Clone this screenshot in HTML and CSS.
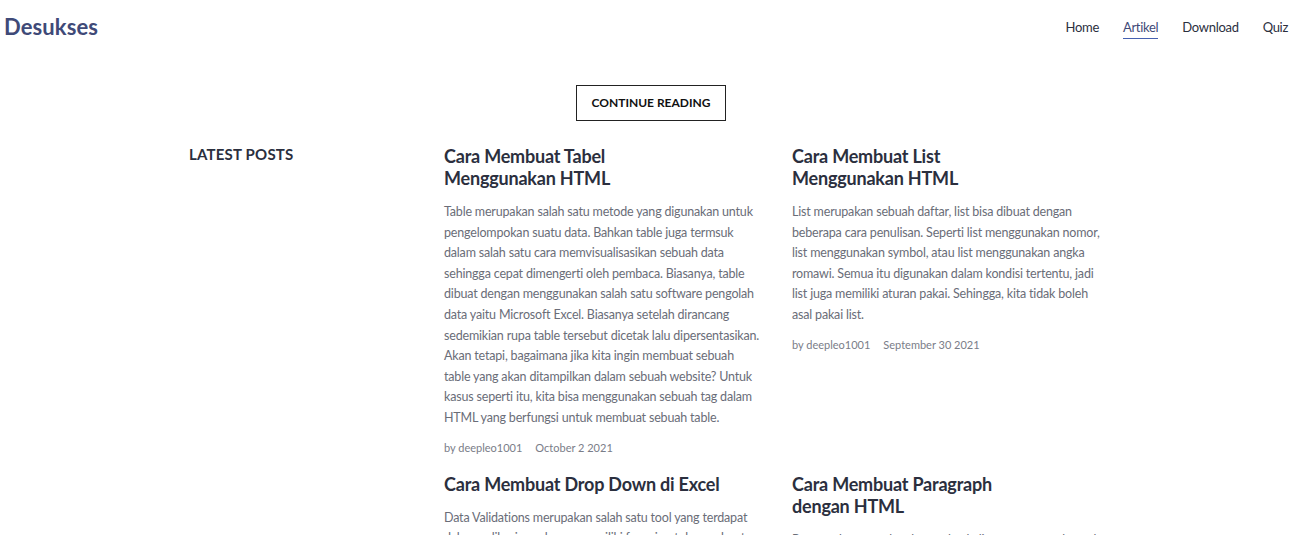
FILE: index.html
```html
<!DOCTYPE html>
<html lang="id">
<head>
<meta charset="utf-8">
<title>Desukses</title>
<link rel="stylesheet" href="styles.css">
</head>
<body>
<header class="site-header">
  <a class="logo" href="#">Desukses</a>
  <nav class="nav">
    <a href="#">Home</a>
    <a href="#" class="active">Artikel</a>
    <a href="#">Download</a>
    <a href="#">Quiz</a>
  </nav>
</header>
<div class="cta-row">
  <a class="btn" href="#">CONTINUE READING</a>
</div>
<main class="content">
  <aside class="sidebar">
    <h3 class="side-title">LATEST POSTS</h3>
  </aside>
  <section class="posts">
    <article class="post">
      <h2 class="post-title">Cara Membuat Tabel<br>Menggunakan HTML</h2>
      <p class="post-text">Table merupakan salah satu metode yang digunakan untuk pengelompokan suatu data. Bahkan table juga termsuk dalam salah satu cara memvisualisasikan sebuah data sehingga cepat dimengerti oleh pembaca. Biasanya, table dibuat dengan menggunakan salah satu software pengolah data yaitu Microsoft Excel. Biasanya setelah dirancang sedemikian rupa table tersebut dicetak lalu dipersentasikan. Akan tetapi, bagaimana jika kita ingin membuat sebuah table yang akan ditampilkan dalam sebuah website? Untuk kasus seperti itu, kita bisa menggunakan sebuah tag dalam HTML yang berfungsi untuk membuat sebuah table.</p>
      <div class="meta"><span>by deepleo1001</span><span>October 2 2021</span></div>
    </article>
    <article class="post">
      <h2 class="post-title">Cara Membuat List<br>Menggunakan HTML</h2>
      <p class="post-text">List merupakan sebuah daftar, list bisa dibuat dengan beberapa cara penulisan. Seperti list menggunakan nomor, list menggunakan symbol, atau list menggunakan angka romawi. Semua itu digunakan dalam kondisi tertentu, jadi list juga memiliki aturan pakai. Sehingga, kita tidak boleh asal pakai list.</p>
      <div class="meta"><span>by deepleo1001</span><span>September 30 2021</span></div>
    </article>
    <article class="post">
      <h2 class="post-title">Cara Membuat Drop Down di Excel</h2>
      <p class="post-text">Data Validations merupakan salah satu tool yang terdapat dalam aplikasi excel yang memiliki fungsi untuk membuat sebuah daftar pilihan.</p>
    </article>
    <article class="post">
      <h2 class="post-title">Cara Membuat Paragraph<br>dengan HTML</h2>
      <p class="post-text">Paragraph merupakan kumpulan kalimat yang membentuk satu kesatuan makna dalam sebuah tulisan.</p>
    </article>
  </section>
</main>
</body>
</html>
```
FILE: styles.css
```css
* { box-sizing: border-box; }
html, body { margin: 0; padding: 0; }
body {
  font-family: Lato, "Open Sans", sans-serif;
  color: #2b2f3e;
  background: #fff;
  overflow: hidden;
}
a { text-decoration: none; color: inherit; }

.site-header {
  display: flex;
  justify-content: space-between;
  align-items: center;
  height: 54px;
  padding: 0 27px 0 4px;
}
.logo {
  font-size: 22px;
  font-weight: 700;
  color: #3f4a78;
  letter-spacing: 0.1px;
  margin-top: -2px;
}
.nav {
  display: flex;
  gap: 24px;
  font-size: 13px;
  letter-spacing: -0.3px;
  color: #2b2f3e;
}
.nav a { padding: 4px 0 3px; border-bottom: 1px solid transparent; }
.nav a.active {
  color: #3f4a78;
  border-bottom-color: #4560b0;
}

.cta-row {
  display: flex;
  justify-content: center;
  padding-top: 31px;
}
.btn {
  display: inline-block;
  border: 1px solid #222;
  padding: 9px 14px 9px 14px;
  font-size: 12px;
  font-weight: 700;
  color: #111;
  margin-right: 13px;
  line-height: 16px;
}

.content {
  display: flex;
  padding-left: 189px;
  margin-top: 24px;
}
.sidebar { width: 255px; flex: none; }
.side-title {
  margin: 0;
  font-size: 15px;
  font-weight: 700;
  color: #2b2f3e;
  line-height: 18px;
  letter-spacing: 0.2px;
}
.posts {
  display: grid;
  grid-template-columns: 318px 318px;
  column-gap: 30px;
  row-gap: 19px;
}
.post-title {
  margin: 0 0 13px;
  font-size: 18px;
  font-weight: 700;
  line-height: 22px;
  color: #2b2f3e;
  letter-spacing: -0.2px;
}
.post-text {
  margin: 0 0 12px;
  font-size: 12.5px;
  line-height: 20.6px;
  letter-spacing: -0.18px;
  color: #6a6d78;
}
.meta {
  display: flex;
  gap: 13px;
  font-size: 11px;
  color: #7a7d88;
}
```
